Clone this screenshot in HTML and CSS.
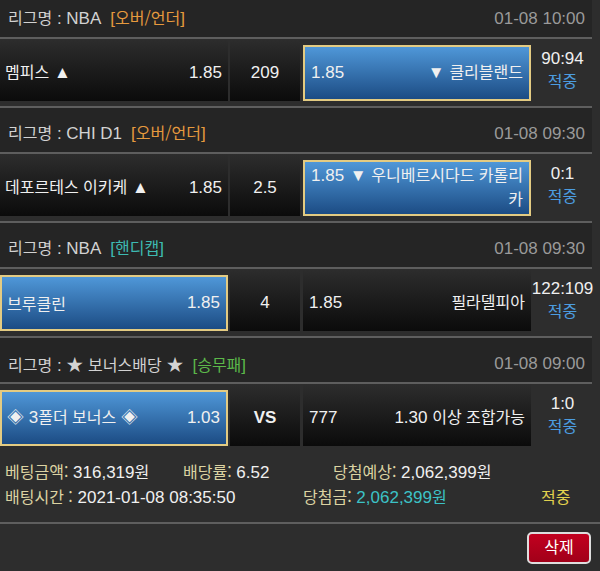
FILE: index.html
```html
<!DOCTYPE html>
<html lang="ko">

<head>
    <meta charset="UTF-8">
    <meta name="viewport" content="width=device-width, initial-scale=1.0">
    <title>베팅내역</title>
    <link rel="stylesheet" href="styles.css">
</head>

<body>
    <div class="bet-list">
        <section class="bet">
            <div class="league">
                <span><span class="ko">리그명</span> : NBA<span class="tag tag-ou">[<span class="ko">오버/언더</span>]</span></span>
                <span class="time">01-08 10:00</span>
            </div>
            <div class="game">
                <div class="cell home"><span><span class="ko">멤피스</span> ▲</span><span>1.85</span></div>
                <div class="cell line">209</div>
                <div class="cell away pick">
                    <div class="away-in"><span class="odds">1.85</span>▼ <span class="ko">클리블랜드</span></div>
                </div>
                <div class="score">
                    <div>90:94</div>
                    <div class="hit"><span class="ko">적중</span></div>
                </div>
            </div>
        </section>

        <section class="bet">
            <div class="league">
                <span><span class="ko">리그명</span> : CHI D1<span class="tag tag-ou">[<span class="ko">오버/언더</span>]</span></span>
                <span class="time">01-08 09:30</span>
            </div>
            <div class="game">
                <div class="cell home"><span><span class="ko">데포르테스 이키케</span> ▲</span><span>1.85</span></div>
                <div class="cell line">2.5</div>
                <div class="cell away pick">
                    <div class="away-in"><span class="odds">1.85</span>▼ <span class="ko">우니베르시다드 카톨리카</span></div>
                </div>
                <div class="score">
                    <div>0:1</div>
                    <div class="hit"><span class="ko">적중</span></div>
                </div>
            </div>
        </section>

        <section class="bet">
            <div class="league">
                <span><span class="ko">리그명</span> : NBA<span class="tag tag-hd">[<span class="ko">핸디캡</span>]</span></span>
                <span class="time">01-08 09:30</span>
            </div>
            <div class="game">
                <div class="cell home pick"><span class="ko">브루클린</span><span>1.85</span></div>
                <div class="cell line">4</div>
                <div class="cell away">
                    <div class="away-in"><span class="odds">1.85</span><span class="ko">필라델피아</span></div>
                </div>
                <div class="score">
                    <div>122:109</div>
                    <div class="hit"><span class="ko">적중</span></div>
                </div>
            </div>
        </section>

        <section class="bet">
            <div class="league">
                <span><span class="ko">리그명</span> : ★ <span class="ko">보너스배당</span> ★<span class="tag tag-wdl">[<span class="ko">승무패</span>]</span></span>
                <span class="time">01-08 09:00</span>
            </div>
            <div class="game">
                <div class="cell home pick"><span>◈ 3<span class="ko">폴더 보너스</span> ◈</span><span>1.03</span></div>
                <div class="cell line vs">VS</div>
                <div class="cell away">
                    <div class="away-in"><span class="odds">777</span>1.30 <span class="ko">이상 조합가능</span></div>
                </div>
                <div class="score">
                    <div>1:0</div>
                    <div class="hit"><span class="ko">적중</span></div>
                </div>
            </div>
        </section>
    </div>

    <div class="summary">
        <div class="sum-row sum-top">
            <span><span class="label ko">베팅금액:</span> 316,319<span class="ko">원</span></span>
            <span><span class="label ko">배당률:</span> 6.52</span>
            <span><span class="label ko">당첨예상:</span> 2,062,399<span class="ko">원</span></span>
        </div>
        <div class="sum-row sum-bottom">
            <span><span class="label ko">배팅시간 :</span> 2021-01-08 08:35:50</span>
            <span><span class="label ko">당첨금:</span> <span class="won">2,062,399<span class="ko">원</span></span></span>
            <span class="result"><span class="ko">적중</span></span>
        </div>
    </div>

    <div class="actions">
        <button class="btn-delete" type="button"><span class="ko">삭제</span></button>
    </div>
</body>

</html>
```

FILE: styles.css
```css
body {
    margin: 0;
    background-color: #2d2d2d;
    color: #f0f0f0;
    font-family: "Liberation Sans", "Noto Sans CJK KR", sans-serif;
    font-size: 17px;
}

/* hangul runs: own font, never grow the line box */
.ko {
    font-family: "Noto Sans CJK KR", sans-serif;
    font-size: 16px;
    line-height: 1;
}

.bet-list {
    width: 592px;
}

.league {
    display: flex;
    justify-content: space-between;
    align-items: center;
    box-sizing: border-box;
    height: 48px;
    padding: 7px 7px 0 8px;
    background-color: #252525;
    border-top: 2px solid #5e5e5e;
    border-bottom: 2px solid #5e5e5e;
    color: #d2d2d2;
}

.bet:first-child .league {
    height: 39px;
    padding-top: 0;
    border-top: 0;
}

.time {
    color: #9a9a9a;
}

.tag {
    margin-left: 9px;
}

.tag-ou {
    color: #e69a3e;
}

.tag-hd {
    color: #3dbab2;
}

.tag-wdl {
    color: #5cb84a;
}

.game {
    display: flex;
    align-items: flex-start;
    gap: 2px;
    padding-bottom: 5px;
    line-height: 24px;
}

.cell {
    flex-shrink: 0;
    box-sizing: border-box;
    height: 62px;
    padding-top: 6px;
    display: flex;
    align-items: center;
    background: linear-gradient(#2d2d2d, #0b0b0b);
}

.cell.pick {
    height: 56px;
    margin-top: 6px;
    padding-top: 0;
    border: 2px solid #e3cb82;
    background: linear-gradient(#4f97d8, #1c4c84);
}

.home {
    width: 228px;
    justify-content: space-between;
    padding-left: 5px;
    padding-right: 6px;
}

.line {
    width: 70px;
    margin-right: 1px;
    justify-content: center;
}

.vs {
    font-weight: bold;
}

.away {
    width: 228px;
    padding-left: 6px;
    padding-right: 6px;
}

.away-in {
    width: 100%;
    text-align: right;
}

.odds {
    float: left;
}

.score {
    flex: 1;
    min-width: 0;
    height: 62px;
    display: flex;
    flex-direction: column;
    justify-content: center;
    align-items: center;
    line-height: 23px;
    white-space: nowrap;
}

.hit {
    color: #4c9de0;
}

.summary {
    padding: 9px 0 12px 5px;
    line-height: 25px;
    border-bottom: 2px solid #5e5e5e;
}

.sum-row {
    display: grid;
}

.sum-top {
    grid-template-columns: 178px 150px 1fr;
}

.sum-bottom {
    grid-template-columns: 298px 238px 1fr;
}

.label {
    color: #dcd3a2;
}

.won {
    color: #3cc2c6;
}

.result {
    color: #e2d24e;
}

.actions {
    display: flex;
    justify-content: flex-end;
    padding: 8px 9px 0 0;
}

.btn-delete {
    width: 64px;
    height: 32px;
    padding: 0;
    border: 2px solid #dedede;
    border-radius: 5px;
    background: linear-gradient(#c2001f, #a10019);
    color: #fff;
    font-family: inherit;
    font-size: 17px;
    cursor: pointer;
}
```
